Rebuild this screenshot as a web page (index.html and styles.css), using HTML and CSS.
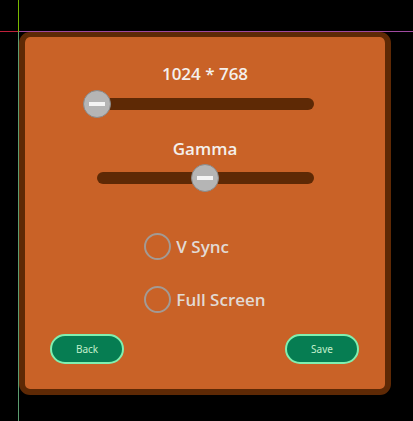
FILE: index.html
```html
<!DOCTYPE html>
<html lang="en">
<head>
    <meta charset="UTF-8">
    <meta name="viewport" content="width=device-width, initial-scale=1.0">
    <title>Options</title>
    <link rel="stylesheet" href="styles.css">
</head>
<body>
    <div class="guide guide-h"></div>
    <div class="guide guide-h-left"></div>
    <div class="guide guide-v-top"></div>
    <div class="guide guide-v"></div>

    <div class="panel">
        <div class="title title-first">1024 * 768</div>
        <div class="slider">
            <div class="track"></div>
            <div class="thumb" style="left: 0%"></div>
        </div>

        <div class="title title-second">Gamma</div>
        <div class="slider">
            <div class="track"></div>
            <div class="thumb" style="left: 50%"></div>
        </div>

        <div class="options">
            <label class="radio"><span class="circle"></span>V Sync</label>
            <label class="radio"><span class="circle"></span>Full Screen</label>
        </div>

        <div class="buttons">
            <button class="btn">Back</button>
            <button class="btn">Save</button>
        </div>
    </div>
</body>
</html>
```

FILE: styles.css
```css
body {
    margin: 0;
    padding: 0;
    background-color: #000;
    font-family: "Open Sans", "Noto Sans", sans-serif;
    height: 421px;
    overflow: hidden;
    position: relative;
}
.guide {
    position: absolute;
}
.guide-h {
    top: 31px;
    left: 18px;
    right: 0;
    height: 1px;
    background-color: #a04aa0;
}
.guide-h-left {
    top: 31px;
    left: 0;
    width: 18px;
    height: 1px;
    background-color: #c0203a;
}
.guide-v-top {
    top: 0;
    left: 18px;
    width: 1px;
    height: 32px;
    background-color: #78b800;
}
.guide-v {
    top: 32px;
    left: 18px;
    width: 1px;
    bottom: 0;
    background-color: #5c9c70;
}
.panel {
    box-sizing: border-box;
    margin: 32px 0 0 19px;
    width: 372px;
    height: 363px;
    border: 6px solid #5e2905;
    border-top-width: 5px;
    border-radius: 11px;
    background-color: #c96227;
    display: flex;
    flex-direction: column;
}
.title {
    color: #f4f0ec;
    font-size: 17px;
    font-weight: 600;
    line-height: 24px;
    text-align: center;
}
.title-first {
    margin-top: 25px;
}
.title-second {
    margin-top: 19px;
}
.slider {
    position: relative;
    align-self: center;
    width: 217px;
    height: 28px;
    margin-top: 4px;
    display: flex;
    align-items: center;
}
.title-second + .slider {
    margin-top: 3px;
}
.track {
    width: 100%;
    height: 12px;
    border-radius: 6px;
    background-color: #5e2905;
}
.thumb {
    position: absolute;
    top: 0;
    box-sizing: border-box;
    width: 28px;
    height: 28px;
    margin-left: -14px;
    border-radius: 50%;
    border: 1px solid #8a8a8a;
    background-color: #b5b5b5;
}
.thumb::after {
    content: "";
    position: absolute;
    left: 5px;
    right: 5px;
    top: 11px;
    height: 4px;
    background-color: #f4f4f4;
}
.options {
    align-self: center;
    display: flex;
    flex-direction: column;
    gap: 25px;
    margin-top: 40px;
}
.radio {
    display: flex;
    align-items: center;
    gap: 5px;
    height: 28px;
    color: #e2dad4;
    font-size: 17px;
    font-weight: 600;
}
.circle {
    box-sizing: border-box;
    width: 27px;
    height: 27px;
    border-radius: 50%;
    border: 2px solid #a39a94;
}
.buttons {
    display: flex;
    justify-content: space-between;
    padding: 0 26px 0 25px;
    margin-top: 21px;
}
.btn {
    box-sizing: border-box;
    width: 74px;
    height: 30px;
    border: 2px solid #80f0b0;
    border-radius: 15px;
    background-color: #067d52;
    color: #c4f0cc;
    font-family: "Noto Sans", sans-serif;
    font-size: 10px;
    padding: 0;
}
```
